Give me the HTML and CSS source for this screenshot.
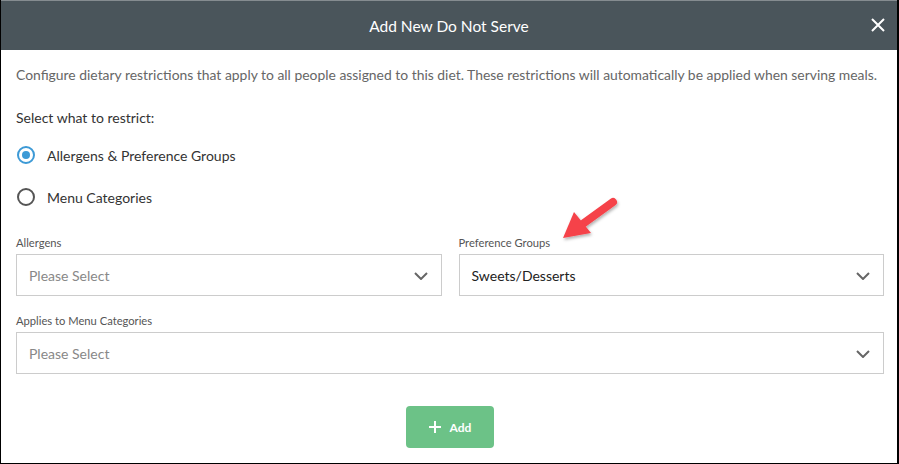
FILE: index.html
```html
<!DOCTYPE html>
<html>
<head>
  <meta charset="UTF-8">
  <title>Add New Do Not Serve</title>
  <link rel="stylesheet" href="styles.css">
</head>
<body>
  <div class="modal">
    <div class="modal-header">
      <h3>Add New Do Not Serve</h3>
      <button class="close-btn" aria-label="Close">
        <svg width="14" height="14" viewBox="0 0 14 14"><path d="M1 1 L13 13 M13 1 L1 13" stroke="#fff" stroke-width="2" fill="none"/></svg>
      </button>
    </div>
    <div class="modal-body">
      <p class="intro">Configure dietary restrictions that apply to all people assigned to this diet. These restrictions will automatically be applied when serving meals.</p>
      <p class="question">Select what to restrict:</p>
      <label class="radio checked"><span class="dot"></span>Allergens &amp; Preference Groups</label>
      <label class="radio"><span class="dot"></span>Menu Categories</label>

      <div class="row">
        <div class="field">
          <div class="field-label">Allergens</div>
          <div class="select placeholder">Please Select<svg class="chev" width="14" height="8" viewBox="0 0 14 8"><path d="M1 1 L7 7 L13 1" stroke="#666" stroke-width="2" fill="none"/></svg></div>
        </div>
        <div class="field">
          <div class="field-label">Preference Groups</div>
          <div class="select">Sweets/Desserts<svg class="chev" width="14" height="8" viewBox="0 0 14 8"><path d="M1 1 L7 7 L13 1" stroke="#666" stroke-width="2" fill="none"/></svg></div>
        </div>
      </div>
      <div class="field">
        <div class="field-label">Applies to Menu Categories</div>
        <div class="select placeholder">Please Select<svg class="chev" width="14" height="8" viewBox="0 0 14 8"><path d="M1 1 L7 7 L13 1" stroke="#666" stroke-width="2" fill="none"/></svg></div>
      </div>

      <div class="actions">
        <button class="add-btn">
          <svg class="plus" width="12" height="12" viewBox="0 0 12 12"><path d="M6 0 V12 M0 6 H12" stroke="#fff" stroke-width="2" fill="none"/></svg>Add
        </button>
      </div>
    </div>

    <!-- callout arrow -->
    <svg class="callout" width="80" height="70" viewBox="0 0 80 70">
      <defs>
        <filter id="sh" x="-20%" y="-20%" width="140%" height="140%">
          <feDropShadow dx="1" dy="2" stdDeviation="1.5" flood-color="#000" flood-opacity="0.3"/>
        </filter>
      </defs>
      <g filter="url(#sh)">
        <line x1="60" y1="12" x2="31" y2="33" stroke="#f5424a" stroke-width="8" stroke-linecap="round"/>
        <polygon points="10,48 21,22 38,43" fill="#f5424a"/>
      </g>
    </svg>
  </div>
</body>
</html>
```

FILE: styles.css
```css
body {
  margin: 0;
  font-family: Lato, "Open Sans", Arial, sans-serif;
  background: #fff;
}
.modal {
  position: relative;
  width: 899px;
  height: 464px;
  box-sizing: border-box;
  border-left: 1px solid #000;
  border-right: 2px solid #000;
  border-bottom: 1px solid #000;
  background: #fff;
}
.modal-header {
  height: 50px;
  box-sizing: border-box;
  border-top: 1px solid #858c90;
  background-color: #4a555b;
  display: flex;
  align-items: center;
  justify-content: center;
  position: relative;
}
.modal-header h3 {
  margin: 0;
  color: #fff;
  font-size: 15.5px;
  font-weight: normal;
}
.close-btn {
  position: absolute;
  right: 12px;
  top: 17px;
  background: none;
  border: none;
  padding: 0;
  cursor: pointer;
  line-height: 0;
}
.modal-body {
  padding: 16px 13px 0 15px;
}
.intro {
  margin: 0;
  font-size: 13.9px;
  color: #666;
  line-height: 18px;
}
.question {
  margin: 25px 0 0 0;
  font-size: 14px;
  color: #333;
  line-height: 18px;
}
.radio {
  display: flex;
  align-items: center;
  font-size: 14px;
  color: #333;
  height: 20px;
  margin-top: 18px;
  padding-left: 1px;
}
.radio + .radio {
  margin-top: 22px;
}
.dot {
  width: 14px;
  height: 14px;
  border: 2px solid #555;
  border-radius: 50%;
  margin-right: 12px;
  position: relative;
}
.radio.checked .dot {
  border-color: #3d9ad6;
}
.radio.checked .dot::after {
  content: "";
  position: absolute;
  left: 3px;
  top: 3px;
  width: 8px;
  height: 8px;
  border-radius: 50%;
  background: #3d9ad6;
}
.row {
  display: flex;
  gap: 17px;
  margin-top: 29px;
}
.row .field {
  flex: 1;
}
.field {
  margin-bottom: 18px;
}
.field-label {
  font-size: 11.2px;
  color: #555;
  line-height: 14px;
  margin-bottom: 4px;
}
.select {
  height: 42px;
  box-sizing: border-box;
  border: 1px solid #ccc;
  display: flex;
  align-items: center;
  justify-content: space-between;
  padding: 0 13px 0 12px;
  font-size: 14px;
  color: #222;
}
.select.placeholder {
  color: #888;
}
.chev {
  margin-top: 2px;
}
.actions {
  display: flex;
  justify-content: center;
  margin-top: 32px;
}
.add-btn {
  width: 88px;
  height: 42px;
  background-color: #6cc287;
  border: none;
  border-radius: 4px;
  color: #fff;
  font-family: Lato, "Open Sans", Arial, sans-serif;
  font-weight: bold;
  font-size: 12px;
  display: flex;
  align-items: center;
  justify-content: center;
  cursor: pointer;
}
.plus {
  margin-right: 9px;
}
.callout {
  position: absolute;
  left: 552px;
  top: 190px;
}
```
